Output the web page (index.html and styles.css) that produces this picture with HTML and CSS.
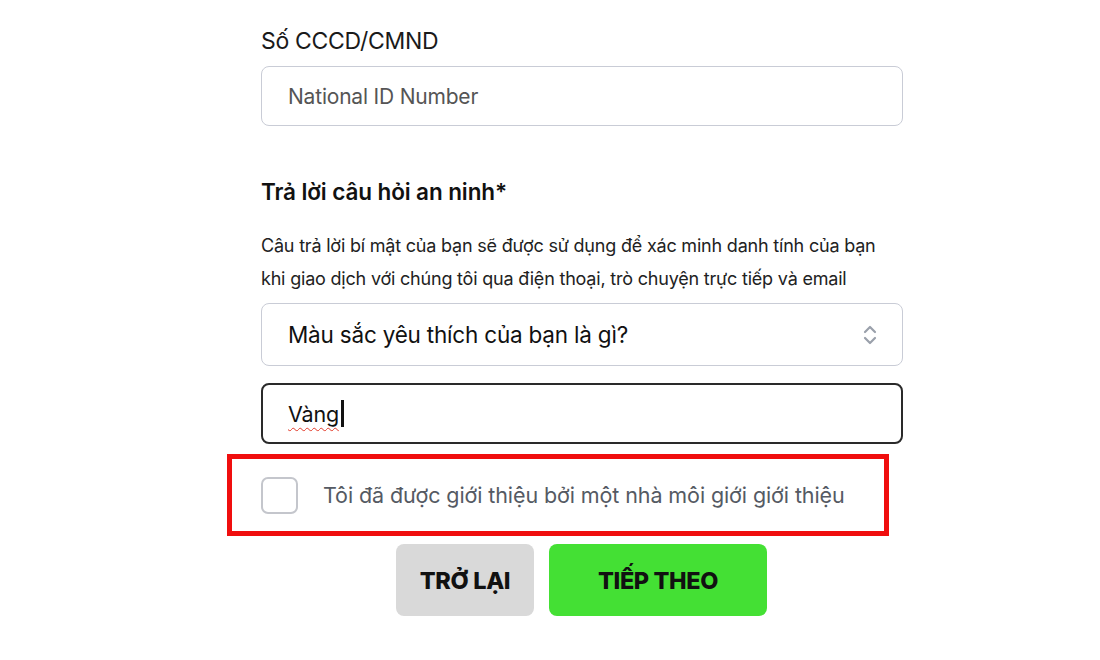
FILE: index.html
```html
<!DOCTYPE html>
<html lang="vi">
<head>
    <meta charset="UTF-8">
    <meta name="viewport" content="width=device-width, initial-scale=1.0">
    <title>Xác minh danh tính</title>
    <link rel="stylesheet" href="styles.css">
</head>
<body>
    <div class="form">
        <label class="label" for="nid">Số CCCD/CMND</label>
        <div class="field">
            <span class="placeholder">National ID Number</span>
        </div>

        <h3 class="heading">Trả lời câu hỏi an ninh*</h3>
        <p class="hint">Câu trả lời bí mật của bạn sẽ được sử dụng để xác minh danh tính của bạn khi giao dịch với chúng tôi qua điện thoại, trò chuyện trực tiếp và email</p>

        <div class="field select">
            <span class="value">Màu sắc yêu thích của bạn là gì?</span>
            <svg class="updown" width="16" height="24" viewBox="0 0 16 24">
                <path d="M3 9 L8 4 L13 9" fill="none" stroke="#9aa0ab" stroke-width="2.2" stroke-linecap="round" stroke-linejoin="round"/>
                <path d="M3 15 L8 20 L13 15" fill="none" stroke="#9aa0ab" stroke-width="2.2" stroke-linecap="round" stroke-linejoin="round"/>
            </svg>
        </div>

        <div class="field answer">
            <span class="value typed">Vàng</span><span class="caret"></span>
        </div>

        <!-- referral checkbox, outlined in red -->
        <div class="referral">
            <span class="checkbox"></span>
            <span class="referral-text">Tôi đã được giới thiệu bởi một nhà môi giới giới thiệu</span>
        </div>

        <div class="actions">
            <button class="btn back">TRỞ LẠI</button>
            <button class="btn next">TIẾP THEO</button>
        </div>
    </div>
</body>
</html>
```

FILE: styles.css
```css
* {
    margin: 0;
    padding: 0;
    box-sizing: border-box;
    font-family: 'Inter', 'Roboto', sans-serif;
}
body {
    background: #fff;
    color: #111;
}
.form {
    width: 642px;
    margin-left: 261px;
    padding-top: 26px;
    display: flex;
    flex-direction: column;
}
.label {
    font-size: 23px;
    line-height: 30px;
    color: #1a1a1a;
    margin-bottom: 10px;
    letter-spacing: -0.3px;
}
.field {
    height: 60px;
    border: 1px solid #c9ccd6;
    border-radius: 8px;
    display: flex;
    align-items: center;
    padding: 0 26px;
}
.placeholder {
    font-size: 21px;
    color: #555;
    letter-spacing: -0.2px;
}
.heading {
    font-size: 22.5px;
    font-weight: 600;
    margin-top: 51px;
    line-height: 30px;
    letter-spacing: -0.1px;
}
.hint {
    font-size: 18px;
    line-height: 33px;
    color: #222;
    margin-top: 22px;
    margin-bottom: 8px;
    letter-spacing: -0.2px;
}
.select {
    height: 63px;
    justify-content: space-between;
    padding-right: 24px;
}
.value {
    font-size: 22.5px;
    color: #111;
    letter-spacing: -0.2px;
}
.answer {
    height: 61px;
    margin-top: 17px;
    border: 2px solid #2a2a2a;
    padding-left: 25px;
}
.answer .value {
    font-size: 21.5px;
}
.typed {
    text-decoration: underline wavy #e23a2a;
    text-decoration-thickness: 1px;
    text-underline-offset: 5px;
}
.caret {
    width: 3px;
    height: 27px;
    background: #111;
    margin-left: 2px;
}
.referral {
    width: 662px;
    margin-left: -34px;
    margin-top: 10px;
    height: 82px;
    border: 5px solid #f00e0e;
    display: flex;
    align-items: center;
    padding-left: 29px;
}
.checkbox {
    width: 37px;
    height: 37px;
    border: 2px solid #c4c6cc;
    border-radius: 7px;
    margin-right: 25px;
}
.referral-text {
    font-size: 21.5px;
    color: #555a63;
    letter-spacing: -0.1px;
}
.actions {
    display: flex;
    gap: 15px;
    margin-top: 8px;
    margin-left: 135px;
}
.btn {
    height: 72px;
    border: none;
    border-radius: 8px;
    font-size: 23.5px;
    font-weight: 800;
    color: #111;
    letter-spacing: -0.4px;
}
.back {
    width: 138px;
    background: #d9d9d9;
}
.next {
    width: 218px;
    background: #44e034;
}
```
